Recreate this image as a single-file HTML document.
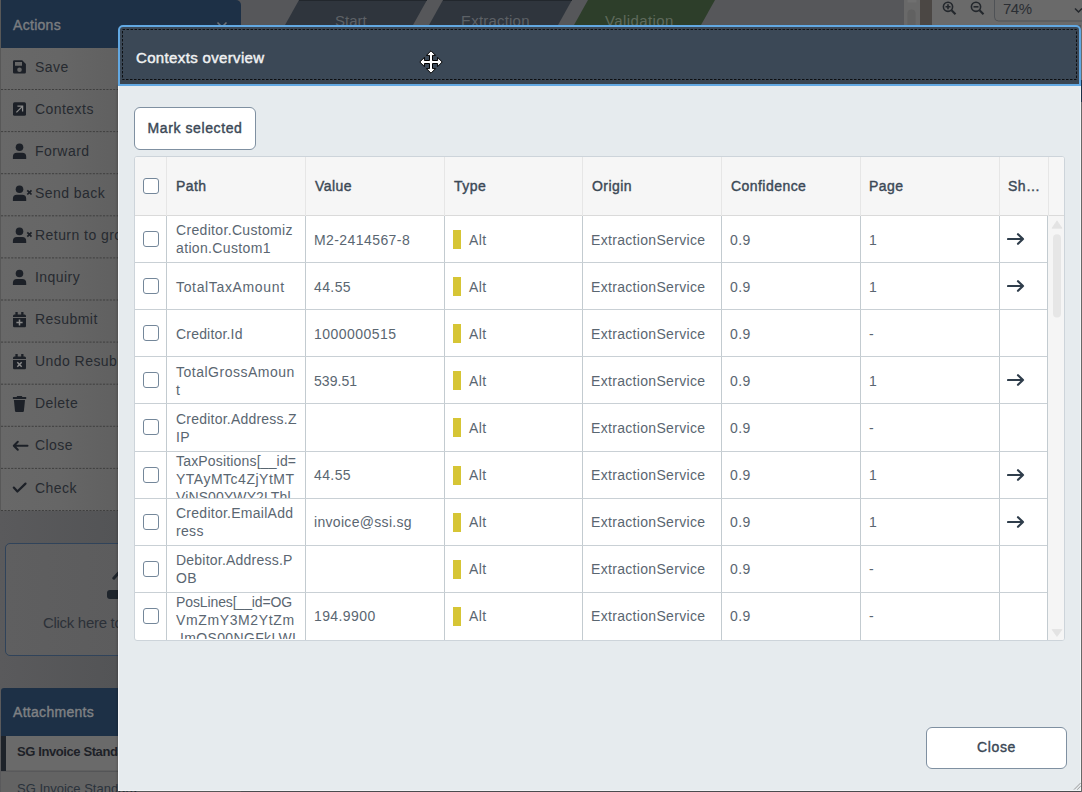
<!DOCTYPE html><html><head><meta charset="utf-8"><style>
*{box-sizing:border-box;margin:0;padding:0}
html,body{width:1082px;height:792px;overflow:hidden}
body{position:relative;background:#56575a;font-family:"Liberation Sans",sans-serif;}
.a{position:absolute}
.nw{white-space:nowrap}
#act-h{left:0;top:0;width:241px;height:48px;background:#1d3046;border-top-right-radius:5px}
#act-h span{position:absolute;left:13px;top:16.5px;font-size:14px;font-weight:normal;color:#7b7d80;letter-spacing:0.3px;-webkit-text-stroke:0.4px #7b7d80}
#items{left:0;top:48px;width:241px;height:463px;background:linear-gradient(90deg,#686868 0px,#666 60px,#606060 118px)}
.it{position:absolute;left:0;width:241px}
.it .t{position:absolute;left:35px;font-size:14px;color:#262a30;white-space:nowrap;letter-spacing:0.45px}
.it svg{position:absolute;left:13px}
#modal{left:118px;top:84px;width:963px;height:707px;background:#e6ebee;border:1px solid #f2f4f6;border-top:none;box-shadow:-1px 1px 2px rgba(0,0,0,0.18)}
#mh{left:118px;top:25px;width:963px;height:61px;background:#3b4856;border:2px solid #62a8e2;border-radius:5px 5px 0 0}
#mh .inner{position:absolute;left:0;top:0}
#mh span{position:absolute;left:16px;top:22px;font-size:15px;font-weight:normal;color:#f0f1f2;letter-spacing:0.35px;-webkit-text-stroke:0.45px #f0f1f2}
.btn{position:absolute;background:#fff;border:1px solid #7f90a1;border-radius:6px;font-size:14px;font-weight:normal;color:#3b4856;text-align:center;letter-spacing:0.6px;-webkit-text-stroke:0.4px #3b4856}
#tbl{left:134px;top:156px;width:931px;height:485px;border:1px solid #cdd4da;background:#fff;overflow:hidden;border-radius:3px}
.hd{position:absolute;left:0;top:0;width:929px;height:59px;background:#f6f6f6;border-bottom:1px solid #dadada}
.hv{position:absolute;top:0;height:59px;width:1px;background:#e6e6e6}
.bv{position:absolute;top:59px;height:426px;width:1px;background:#c3cbd0}
.rl{position:absolute;left:0;width:912px;height:1px;background:#c9d0d5}
.ht{position:absolute;top:20.5px;font-size:14px;font-weight:normal;color:#3c4956;white-space:nowrap;letter-spacing:0.45px;-webkit-text-stroke:0.4px #3c4956}
.ct{position:absolute;font-size:14px;color:#5a6671;white-space:nowrap;letter-spacing:0.35px;line-height:18px}
.cb{position:absolute;width:16px;height:16px;border:1px solid #74879a;border-radius:3px;background:#fff}
.yb{position:absolute;width:8px;height:19px;background:#d6c535}
</style></head><body>
<div id="act-h" class="a"><span>Actions</span></div>
<svg class="a" style="left:214px;top:18px" width="16" height="12" viewBox="0 0 16 12"><path d="M3.5 4.5L8 9L12.5 4.5" fill="none" stroke="#6f7378" stroke-width="1.6"/></svg>
<div id="items" class="a">
<div class="it" style="top:0.00px;height:42.5px"><div class="t" style="top:10.5px">Save</div></div>
<div class="it" style="top:42.10px;height:42.5px"><div class="t" style="top:10.5px">Contexts</div></div>
<div class="it" style="top:84.20px;height:42.5px"><div class="t" style="top:10.5px">Forward</div></div>
<div class="it" style="top:126.30px;height:42.5px"><div class="t" style="top:10.5px">Send back</div></div>
<div class="it" style="top:168.40px;height:42.5px"><div class="t" style="top:10.5px">Return to group</div></div>
<div class="it" style="top:210.50px;height:42.5px"><div class="t" style="top:10.5px">Inquiry</div></div>
<div class="it" style="top:252.60px;height:42.5px"><div class="t" style="top:10.5px">Resubmit</div></div>
<div class="it" style="top:294.70px;height:42.5px"><div class="t" style="top:10.5px">Undo Resubmit</div></div>
<div class="it" style="top:336.80px;height:42.5px"><div class="t" style="top:10.5px">Delete</div></div>
<div class="it" style="top:378.90px;height:42.5px"><div class="t" style="top:10.5px">Close</div></div>
<div class="it" style="top:421.00px;height:42.5px"><div class="t" style="top:10.5px">Check</div></div>
</div>
<svg class="a" style="left:0;top:0" width="241" height="520" viewBox="0 0 241 520" stroke="#3f3f3f" stroke-width="1" stroke-dasharray="2.1 1.3"><line x1="1" y1="89.50" x2="241" y2="89.50"/><line x1="1" y1="131.60" x2="241" y2="131.60"/><line x1="1" y1="173.70" x2="241" y2="173.70"/><line x1="1" y1="215.80" x2="241" y2="215.80"/><line x1="1" y1="257.90" x2="241" y2="257.90"/><line x1="1" y1="300.00" x2="241" y2="300.00"/><line x1="1" y1="342.10" x2="241" y2="342.10"/><line x1="1" y1="384.20" x2="241" y2="384.20"/><line x1="1" y1="426.30" x2="241" y2="426.30"/><line x1="1" y1="468.40" x2="241" y2="468.40"/><line x1="1" y1="510.50" x2="241" y2="510.50"/></svg>
<svg class="a" style="left:0;top:0" width="40" height="520" viewBox="0 0 40 520" fill="#1c2027"><path d="M13 61.5Q13 60.2 14.3 60.2H22.2L25.9 63.9V72.3Q25.9 73.6 24.6 73.6H14.3Q13 73.6 13 72.3Z M15 62V65.8H22V62Z M19.5 67.5A2.3 2.3 0 1 0 19.5 72.1A2.3 2.3 0 1 0 19.5 67.5Z" fill-rule="evenodd"/><rect x="13" y="102.2" width="13" height="13.6" rx="1.6"/><path d="M16.4 112.4L22.4 106.4M17.4 106.2H22.6V111.4" stroke="#8a8a8a" stroke-width="1.3" fill="none"/><circle cx="19.5" cy="147.3" r="3.8"/><path d="M12.9 158.9V156.8Q12.9 152.8 16.9 152.8H22.2Q26.2 152.8 26.2 156.8V158.9Z"/><circle cx="19.5" cy="189.3" r="3.8"/><path d="M12.9 200.9V198.8Q12.9 194.8 16.9 194.8H22.2Q26.2 194.8 26.2 198.8V200.9Z"/><path d="M27.3 190.3L31.5 194.5M31.5 190.3L27.3 194.5" stroke="#1c2027" stroke-width="1.7"/><circle cx="19.5" cy="231.4" r="3.8"/><path d="M12.9 243V240.9Q12.9 236.9 16.9 236.9H22.2Q26.2 236.9 26.2 240.9V243Z"/><path d="M27.3 232.4L31.5 236.6M31.5 232.4L27.3 236.6" stroke="#1c2027" stroke-width="1.7"/><circle cx="19.5" cy="273.5" r="3.8"/><path d="M12.9 285.1V283Q12.9 279 16.9 279H22.2Q26.2 279 26.2 283V285.1Z"/><rect x="15.4" y="312" width="2.3" height="3"/><rect x="21.2" y="312" width="2.3" height="3"/><path d="M13 316Q13 314.4 14.4 314.4H24.6Q26 314.4 26 316V316.9H13Z"/><path d="M13 318H26V326Q26 327.2 24.8 327.2H14.2Q13 327.2 13 326Z"/><path d="M19.5 319.4V325.6M16.4 322.5H22.6" stroke="#8a8a8a" stroke-width="1.5"/><rect x="15.4" y="354" width="2.3" height="3"/><rect x="21.2" y="354" width="2.3" height="3"/><path d="M13 358Q13 356.4 14.4 356.4H24.6Q26 356.4 26 358V358.9H13Z"/><path d="M13 360H26V368Q26 369.2 24.8 369.2H14.2Q13 369.2 13 368Z"/><path d="M17.3 362.3L21.7 366.7M21.7 362.3L17.3 366.7" stroke="#8a8a8a" stroke-width="1.5"/><path d="M17.2 396H21.8L22.4 397H26.2V398.9H12.9V397H16.6Z"/><path d="M13.9 399.9H25L23.9 411Q23.8 411.9 22.9 411.9H16Q15.1 411.9 15 411Z"/></svg>
<svg class="a" style="left:0;top:0" width="40" height="520" viewBox="0 0 40 520" fill="none" stroke="#1c2027" stroke-width="2" stroke-linecap="round" stroke-linejoin="round"><path d="M14 445.7H27.5M17.8 441.7L13.8 445.7L17.8 449.7"/><path d="M13.8 487.6L17.4 491.5L25.5 483.6" stroke-width="2.2"/></svg>
<svg class="a" style="left:0;top:0" width="1082" height="30" viewBox="0 0 1082 30"><polygon points="299,0 427,0 413,25 285,25" fill="#2f353d"/><line x1="299" y1="0.5" x2="427" y2="0.5" stroke="#22272d" stroke-width="1"/><polygon points="443,0 572,0 558,25 429,25" fill="#2f353d"/><line x1="443" y1="0.5" x2="572" y2="0.5" stroke="#22272d" stroke-width="1"/><polygon points="588,0 715,0 701,25 574,25" fill="#2d3e2a"/><rect x="904" y="0" width="16" height="25" fill="#696969"/><rect x="907.5" y="9.5" width="8" height="22" rx="4" fill="#616161"/><rect x="907.5" y="0" width="9" height="2.5" fill="#707070"/><rect x="920" y="0" width="12" height="25" fill="#4b4744"/><rect x="932" y="0" width="150" height="25" fill="#6a6a6a"/><g fill="none" stroke="#23272c" stroke-width="1.6"><circle cx="948" cy="6.8" r="4.6"/><path d="M951.5 10.3L955.5 14.3" stroke-width="2.2"/><path d="M945.5 6.8H950.5M948 4.3V9.3"/><circle cx="976" cy="6.8" r="4.6"/><path d="M979.5 10.3L983.5 14.3" stroke-width="2.2"/><path d="M973.5 6.8H978.5"/></g><rect x="994.5" y="-6" width="100" height="27" rx="4" fill="#6a6a6a" stroke="#4f5256" stroke-width="1"/><path d="M1075 8.5L1078.5 12L1082 8.5" fill="none" stroke="#23272c" stroke-width="1.5"/></svg>
<div class="a nw" style="left:335px;top:12px;font-size:15px;color:#5d6166">Start</div>
<div class="a nw" style="left:461px;top:12px;font-size:15px;color:#5d6166;letter-spacing:0.2px">Extraction</div>
<div class="a nw" style="left:605px;top:12px;font-size:15px;color:#5f6a5c;letter-spacing:0.4px">Validation</div>
<div class="a nw" style="left:1003px;top:-0.5px;font-size:15px;color:#2b2e33;letter-spacing:-0.5px">74%</div>
<div class="a" style="left:0;top:511px;width:118px;height:281px;background:linear-gradient(90deg,#5a5a5c,#535456)"></div>
<div class="a" style="left:5px;top:543px;width:200px;height:113px;border:1px solid #30435a;border-radius:5px;background:linear-gradient(90deg,#5f5f60,#5a5a5b)"></div>
<svg class="a" style="left:100px;top:565px" width="18" height="40" viewBox="0 0 18 40"><path d="M13.8 13.2L19 7.5" stroke="#1f252c" stroke-width="3" stroke-linecap="round"/><rect x="7" y="25" width="14" height="9" rx="3" fill="#1f252c"/></svg>
<div class="a nw" style="left:43px;top:614px;font-size:15px;color:#2c3138;letter-spacing:-0.3px">Click here to</div>
<div class="a" style="left:1px;top:688px;width:240px;height:48px;background:#1d3046;border-top-left-radius:3px"></div>
<div class="a nw" style="left:13px;top:704px;font-size:14px;font-weight:normal;color:#7f8184;letter-spacing:0.3px;-webkit-text-stroke:0.4px #7f8184">Attachments</div>
<div class="a" style="left:1px;top:736px;width:240px;height:35px;background:#6a6a6a;border-bottom:1px solid #606060"></div>
<div class="a" style="left:1px;top:736px;width:5px;height:35px;background:#1e232a"></div>
<div class="a nw" style="left:17px;top:744.4px;font-size:13px;font-weight:bold;color:#1d2127;letter-spacing:-0.4px">SG Invoice Standard</div>
<div class="a" style="left:1px;top:772px;width:240px;height:20px;background:#636363"></div>
<div class="a nw" style="left:17px;top:780.5px;font-size:13px;color:#2a323b;letter-spacing:0px">SG Invoice Standard</div>
<div class="a" style="left:0;top:0;width:1px;height:511px;background:#585858"></div>
<div class="a" style="left:1081px;top:25px;width:1px;height:767px;background:#6a6a6a"></div>
<div class="a" style="left:1081px;top:80px;width:1px;height:22px;background:#1f3045"></div>
<div id="modal" class="a"></div>
<div id="mh" class="a"><svg class="inner" width="959" height="57" viewBox="120 27 959 57"><rect x="122.5" y="29.5" width="954" height="50" fill="none" stroke="#0d0f12" stroke-width="1" stroke-dasharray="2.5 1.5"/><rect x="120" y="80" width="959" height="4" fill="#37424e" opacity="0.5"/></svg><span>Contexts overview</span></div>
<div class="btn" style="left:134px;top:107px;width:122px;height:43px;line-height:41px">Mark selected</div>
<div id="tbl" class="a">
<div class="hd"></div>
<div class="hv" style="left:31px"></div>
<div class="bv" style="left:31px"></div>
<div class="hv" style="left:170px"></div>
<div class="bv" style="left:170px"></div>
<div class="hv" style="left:309px"></div>
<div class="bv" style="left:309px"></div>
<div class="hv" style="left:447px"></div>
<div class="bv" style="left:447px"></div>
<div class="hv" style="left:586px"></div>
<div class="bv" style="left:586px"></div>
<div class="hv" style="left:725px"></div>
<div class="bv" style="left:725px"></div>
<div class="hv" style="left:864px"></div>
<div class="bv" style="left:864px"></div>
<div class="hv" style="left:913px"></div>
<div class="bv" style="left:912px"></div>
<div class="cb" style="left:8px;top:21px"></div>
<div class="ht" style="left:41px">Path</div>
<div class="ht" style="left:180px">Value</div>
<div class="ht" style="left:319px">Type</div>
<div class="ht" style="left:457px">Origin</div>
<div class="ht" style="left:596px">Confidence</div>
<div class="ht" style="left:734px">Page</div>
<div class="ht" style="left:873px">Sh…</div>
<div class="rl" style="top:105.10px"></div>
<div class="cb" style="left:8px;top:74.00px"></div>
<div class="a" style="left:32px;top:59.00px;width:138px;height:46.10px;overflow:hidden">
<div class="ct" style="left:9px;top:5.30px;letter-spacing:0.33px">Creditor.Customiz</div>
<div class="ct" style="left:9px;top:23.30px;letter-spacing:0.35px">ation.Custom1</div>
</div>
<div class="ct" style="left:179px;top:73.50px;letter-spacing:0.42px">M2-2414567-8</div>
<div class="yb" style="left:318px;top:73.00px"></div>
<div class="ct" style="left:334px;top:73.50px;letter-spacing:0.35px">Alt</div>
<div class="ct" style="left:456px;top:73.50px;letter-spacing:0.32px">ExtractionService</div>
<div class="ct" style="left:595px;top:73.50px;letter-spacing:0.35px">0.9</div>
<div class="ct" style="left:734px;top:73.50px;letter-spacing:0.35px">1</div>
<svg class="a" style="left:872px;top:76.00px" width="18" height="12" viewBox="0 0 18 12"><path d="M1 6H16M11 1.2L16 6L11 10.8" fill="none" stroke="#2f3d4b" stroke-width="2.2" stroke-linecap="round" stroke-linejoin="round"/></svg>
<div class="rl" style="top:152.20px"></div>
<div class="cb" style="left:8px;top:121.10px"></div>
<div class="a" style="left:32px;top:106.10px;width:138px;height:46.10px;overflow:hidden">
<div class="ct" style="left:9px;top:14.50px;letter-spacing:0.65px">TotalTaxAmount</div>
</div>
<div class="ct" style="left:179px;top:120.60px;letter-spacing:0.40px">44.55</div>
<div class="yb" style="left:318px;top:120.10px"></div>
<div class="ct" style="left:334px;top:120.60px;letter-spacing:0.35px">Alt</div>
<div class="ct" style="left:456px;top:120.60px;letter-spacing:0.32px">ExtractionService</div>
<div class="ct" style="left:595px;top:120.60px;letter-spacing:0.35px">0.9</div>
<div class="ct" style="left:734px;top:120.60px;letter-spacing:0.35px">1</div>
<svg class="a" style="left:872px;top:123.10px" width="18" height="12" viewBox="0 0 18 12"><path d="M1 6H16M11 1.2L16 6L11 10.8" fill="none" stroke="#2f3d4b" stroke-width="2.2" stroke-linecap="round" stroke-linejoin="round"/></svg>
<div class="rl" style="top:199.30px"></div>
<div class="cb" style="left:8px;top:168.20px"></div>
<div class="a" style="left:32px;top:153.20px;width:138px;height:46.10px;overflow:hidden">
<div class="ct" style="left:9px;top:14.50px;letter-spacing:0.19px">Creditor.Id</div>
</div>
<div class="ct" style="left:179px;top:167.70px;letter-spacing:0.46px">1000000515</div>
<div class="yb" style="left:318px;top:167.20px"></div>
<div class="ct" style="left:334px;top:167.70px;letter-spacing:0.35px">Alt</div>
<div class="ct" style="left:456px;top:167.70px;letter-spacing:0.32px">ExtractionService</div>
<div class="ct" style="left:595px;top:167.70px;letter-spacing:0.35px">0.9</div>
<div class="ct" style="left:734px;top:167.70px;letter-spacing:0.35px">-</div>
<div class="rl" style="top:246.40px"></div>
<div class="cb" style="left:8px;top:215.30px"></div>
<div class="a" style="left:32px;top:200.30px;width:138px;height:46.10px;overflow:hidden">
<div class="ct" style="left:9px;top:5.30px;letter-spacing:0.51px">TotalGrossAmoun</div>
<div class="ct" style="left:9px;top:23.30px;letter-spacing:0.35px">t</div>
</div>
<div class="ct" style="left:179px;top:214.80px;letter-spacing:0.04px">539.51</div>
<div class="yb" style="left:318px;top:214.30px"></div>
<div class="ct" style="left:334px;top:214.80px;letter-spacing:0.35px">Alt</div>
<div class="ct" style="left:456px;top:214.80px;letter-spacing:0.32px">ExtractionService</div>
<div class="ct" style="left:595px;top:214.80px;letter-spacing:0.35px">0.9</div>
<div class="ct" style="left:734px;top:214.80px;letter-spacing:0.35px">1</div>
<svg class="a" style="left:872px;top:217.30px" width="18" height="12" viewBox="0 0 18 12"><path d="M1 6H16M11 1.2L16 6L11 10.8" fill="none" stroke="#2f3d4b" stroke-width="2.2" stroke-linecap="round" stroke-linejoin="round"/></svg>
<div class="rl" style="top:293.50px"></div>
<div class="cb" style="left:8px;top:262.40px"></div>
<div class="a" style="left:32px;top:247.40px;width:138px;height:46.10px;overflow:hidden">
<div class="ct" style="left:9px;top:5.30px;letter-spacing:0.22px">Creditor.Address.Z</div>
<div class="ct" style="left:9px;top:23.30px;letter-spacing:0.35px">IP</div>
</div>
<div class="yb" style="left:318px;top:261.40px"></div>
<div class="ct" style="left:334px;top:261.90px;letter-spacing:0.35px">Alt</div>
<div class="ct" style="left:456px;top:261.90px;letter-spacing:0.32px">ExtractionService</div>
<div class="ct" style="left:595px;top:261.90px;letter-spacing:0.35px">0.9</div>
<div class="ct" style="left:734px;top:261.90px;letter-spacing:0.35px">-</div>
<div class="rl" style="top:340.60px"></div>
<div class="cb" style="left:8px;top:309.50px"></div>
<div class="a" style="left:32px;top:294.50px;width:138px;height:46.10px;overflow:hidden">
<div class="ct" style="left:9px;top:0.30px;letter-spacing:0.17px">TaxPositions[__id=</div>
<div class="ct" style="left:9px;top:18.30px;letter-spacing:0.50px">YTAyMTc4ZjYtMT</div>
<div class="ct" style="left:9px;top:36.30px;letter-spacing:0.11px">ViNS00YWY2LThl</div>
</div>
<div class="ct" style="left:179px;top:309.00px;letter-spacing:0.40px">44.55</div>
<div class="yb" style="left:318px;top:308.50px"></div>
<div class="ct" style="left:334px;top:309.00px;letter-spacing:0.35px">Alt</div>
<div class="ct" style="left:456px;top:309.00px;letter-spacing:0.32px">ExtractionService</div>
<div class="ct" style="left:595px;top:309.00px;letter-spacing:0.35px">0.9</div>
<div class="ct" style="left:734px;top:309.00px;letter-spacing:0.35px">1</div>
<svg class="a" style="left:872px;top:311.50px" width="18" height="12" viewBox="0 0 18 12"><path d="M1 6H16M11 1.2L16 6L11 10.8" fill="none" stroke="#2f3d4b" stroke-width="2.2" stroke-linecap="round" stroke-linejoin="round"/></svg>
<div class="rl" style="top:387.70px"></div>
<div class="cb" style="left:8px;top:356.60px"></div>
<div class="a" style="left:32px;top:341.60px;width:138px;height:46.10px;overflow:hidden">
<div class="ct" style="left:9px;top:5.30px;letter-spacing:0.26px">Creditor.EmailAdd</div>
<div class="ct" style="left:9px;top:23.30px;letter-spacing:0.33px">ress</div>
</div>
<div class="ct" style="left:179px;top:356.10px;letter-spacing:0.31px">invoice@ssi.sg</div>
<div class="yb" style="left:318px;top:355.60px"></div>
<div class="ct" style="left:334px;top:356.10px;letter-spacing:0.35px">Alt</div>
<div class="ct" style="left:456px;top:356.10px;letter-spacing:0.32px">ExtractionService</div>
<div class="ct" style="left:595px;top:356.10px;letter-spacing:0.35px">0.9</div>
<div class="ct" style="left:734px;top:356.10px;letter-spacing:0.35px">1</div>
<svg class="a" style="left:872px;top:358.60px" width="18" height="12" viewBox="0 0 18 12"><path d="M1 6H16M11 1.2L16 6L11 10.8" fill="none" stroke="#2f3d4b" stroke-width="2.2" stroke-linecap="round" stroke-linejoin="round"/></svg>
<div class="rl" style="top:434.80px"></div>
<div class="cb" style="left:8px;top:403.70px"></div>
<div class="a" style="left:32px;top:388.70px;width:138px;height:46.10px;overflow:hidden">
<div class="ct" style="left:9px;top:5.30px;letter-spacing:0.22px">Debitor.Address.P</div>
<div class="ct" style="left:9px;top:23.30px;letter-spacing:0.35px">OB</div>
</div>
<div class="yb" style="left:318px;top:402.70px"></div>
<div class="ct" style="left:334px;top:403.20px;letter-spacing:0.35px">Alt</div>
<div class="ct" style="left:456px;top:403.20px;letter-spacing:0.32px">ExtractionService</div>
<div class="ct" style="left:595px;top:403.20px;letter-spacing:0.35px">0.9</div>
<div class="ct" style="left:734px;top:403.20px;letter-spacing:0.35px">-</div>
<div class="cb" style="left:8px;top:450.80px"></div>
<div class="a" style="left:32px;top:435.80px;width:138px;height:46.10px;overflow:hidden">
<div class="ct" style="left:9px;top:0.30px;letter-spacing:-0.11px">PosLines[__id=OG</div>
<div class="ct" style="left:9px;top:18.30px;letter-spacing:0.62px">VmZmY3M2YtZm</div>
<div class="ct" style="left:9px;top:36.30px;letter-spacing:0.35px;padding-left:4px">ImOS00NGFkLWI</div>
</div>
<div class="ct" style="left:179px;top:450.30px;letter-spacing:0.40px">194.9900</div>
<div class="yb" style="left:318px;top:449.80px"></div>
<div class="ct" style="left:334px;top:450.30px;letter-spacing:0.35px">Alt</div>
<div class="ct" style="left:456px;top:450.30px;letter-spacing:0.32px">ExtractionService</div>
<div class="ct" style="left:595px;top:450.30px;letter-spacing:0.35px">0.9</div>
<div class="ct" style="left:734px;top:450.30px;letter-spacing:0.35px">-</div>
<div class="a" style="left:913px;top:59px;width:16px;height:426px;background:#f5f5f5"></div>
</div>
<svg class="a" style="left:1040px;top:210px" width="30" height="440" viewBox="1040 210 30 440"><polygon points="1057,220.8 1062,228.2 1052,228.2" fill="#e3e3e3" stroke="#e3e3e3" stroke-width="0.8" stroke-linejoin="round"/><rect x="1053" y="234.3" width="8" height="83.3" rx="4" fill="#e6e6e6"/><polygon points="1052,629.5 1062,629.5 1057,636.5" fill="#e3e3e3" stroke="#e3e3e3" stroke-width="0.8" stroke-linejoin="round"/></svg>
<svg class="a" style="left:419px;top:49.5px" width="25" height="25" viewBox="0 0 25 25"><path d="M12 0.8L16.6 5.4H13.5V10.5H18.6V7.4L23.2 12L18.6 16.6V13.5H13.5V18.6H16.6L12 23.2L7.4 18.6H10.5V13.5H5.4V16.6L0.8 12L5.4 7.4V10.5H10.5V5.4H7.4Z" fill="#fff" stroke="#000" stroke-width="1" stroke-linejoin="miter"/></svg>
<svg class="a" style="left:1070px;top:778px" width="12" height="14" viewBox="1070 778 12 14"><path d="M1074 789.6L1080.8 782.8M1077.2 789.6L1080.8 786" stroke="#9a9a9a" stroke-width="1"/></svg>
<div class="btn" style="left:926px;top:727px;width:141px;height:42px;line-height:38.5px">Close</div>
</body></html>
